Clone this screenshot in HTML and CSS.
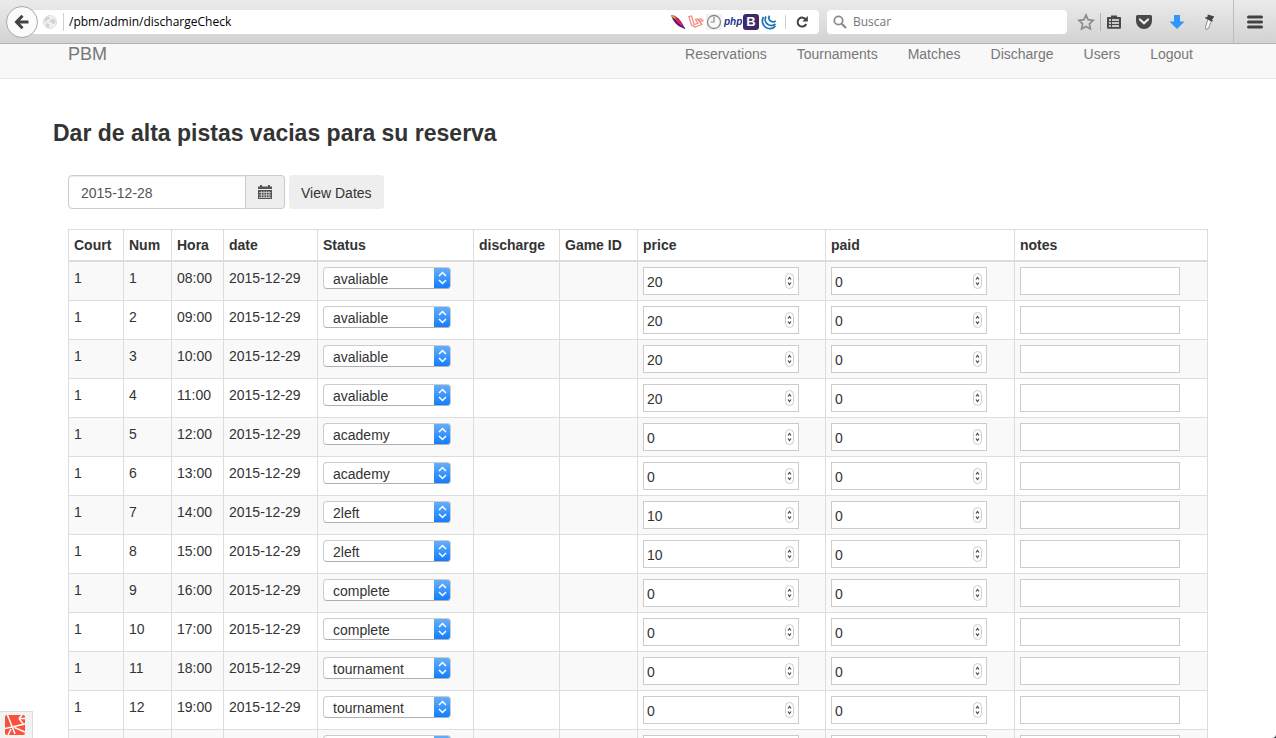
FILE: index.html
```html
<!DOCTYPE html>
<html lang="es">
<head>
<meta charset="utf-8">
<title>PBM</title>
<link rel="stylesheet" href="styles.css">
</head>
<body>
<header class="toolbar">
  <button class="back" aria-label="Back"><svg width="16" height="16" viewBox="0 0 16 16" fill="none" stroke="#424242" stroke-width="3"><path d="M14.500 8H3M8.500 1.800 2.500 8l6 6.200"/></svg></button>
  <div class="urlbar">
    <svg class="globe" width="14" height="14" viewBox="0 0 14 14"><circle cx="7" cy="7" r="6.500" fill="#f0f0f0" stroke="#dedede"/><path d="M2 3.200 5 1.500l2 1-1 2-2 .5-.5 2L1.500 6zM7 5.500l3-2 2.500 2-.5 3-2 .5-1.500-1.500L6.500 7zM3 8l3 1 .5 2.500L5 13 3 11z" fill="#d3d3d3"/></svg>
    <input class="url" type="text" aria-label="Address" value="/pbm/admin/dischargeCheck">
    <div class="sites">
      <svg width="16" height="16" viewBox="0 0 16 16"><path d="M1 1c4 0 8 3 11 8l3 5.500L11 13C6 11 3 7 1 1z" fill="#a3197c"/><path d="M1 1c2 .2 4 1.500 5.500 3L5 6.500C3 5 2 3 1 1z" fill="#d9a32b"/><path d="M5 3.500c3 1.500 5.500 4 7.500 7.500l-2 0C7.500 9 5.500 6.500 5 3.500z" fill="#e0244f"/><path d="M3 4c3 5 6 8 12 10.500" stroke="#3b1a88" stroke-width="1.300" fill="none"/></svg>
      <svg width="16" height="16" viewBox="0 0 16 16" fill="none" stroke="#f58a7e" stroke-width="1.200"><path d="M.8 2.500 3.500 2l2.500 8.500 4-1.200L7.500 5.500 9.500 5l4.500 5.500-7 2.500-3.500-2zM10.500 5.500l2-.8 2.500 2-2.500.8zM.8 2.500l2.700 8.500"/></svg>
      <svg width="16" height="16" viewBox="0 0 16 16"><path fill="#f2f2f2" d="M0 0h16v16H0z"/><circle cx="8" cy="8" r="6.500" fill="#fafafa" stroke="#888" stroke-width="1.300"/><path d="M8 3v5H4.500" fill="none" stroke="#888" stroke-width="1.200"/></svg>
      <span class="php">php</span>
      <span class="boot">B</span>
      <svg width="16" height="16" viewBox="0 0 16 16" fill="none" stroke="#1a72b5" stroke-width="1.700"><path d="M2.500 3C.2 7 1.500 12 6 14c3 1.200 6.500.5 8.500-2M5 2.500c-1.500 3-1 6.500 2.500 8.300 2.500 1.200 5 .8 7-.8M8.500 1.800c-1.200 2-.8 4.300 1.500 5.500 1.700.9 3.500.6 4.800-.5"/></svg>
    </div>
    <button class="reload" aria-label="Reload"><svg width="14" height="14" viewBox="0 0 14 14"><path d="M11 4.800A4.500 4.500 0 1 0 11.200 9" fill="none" stroke="#424242" stroke-width="2"/><path d="M12.800 1v5.500H7.300z" fill="#424242"/></svg></button>
  </div>
  <label class="search">
    <svg width="14" height="14" viewBox="0 0 14 14" fill="none" stroke="#8c8c8c"><circle cx="5.500" cy="5.500" r="4.200" stroke-width="1.800"/><path d="m8.700 8.700 4.300 4.300" stroke-width="2.300"/></svg>
    <input type="text" placeholder="Buscar" aria-label="Buscar">
  </label>
  <div class="tools">
    <button class="tool star" aria-label="Bookmark"><svg width="18" height="18" viewBox="0 0 18 18"><path d="m9 2 2.100 4.700 5.100.6-3.800 3.500 1 5.100L9 13.400l-4.400 2.500 1-5.100L1.800 7.300l5.100-.6z" fill="none" stroke="#8b8b8b" stroke-width="1.700"/></svg></button>
    <button class="tool list" aria-label="Bookmarks list"><svg width="16" height="16" viewBox="0 0 16 16"><path d="M5 3V1.500h6V3h2.500A1.200 1.200 0 0 1 15 4.300v9.200a1.200 1.200 0 0 1-1.300 1.300H2.300A1.200 1.200 0 0 1 1 13.500V4.300A1.200 1.200 0 0 1 2.300 3z" fill="#484848"/><path d="M3 6h2M6 6h7M3 9h2M6 9h7M3 12h2M6 12h7" stroke="#f2f2f2" stroke-width="1.300"/></svg></button>
    <button class="tool pocket" aria-label="Pocket"><svg width="18" height="16" viewBox="0 0 18 16"><path d="M2.500 1h13A1.500 1.500 0 0 1 17 2.500V7A8 8 0 0 1 1 7V2.500A1.500 1.500 0 0 1 2.500 1z" fill="#484848"/><path d="m5 5.500 4 3.800 4-3.800" fill="none" stroke="#eee" stroke-width="2.200" stroke-linecap="round"/></svg></button>
    <button class="tool" aria-label="Downloads"><svg width="16" height="16" viewBox="0 0 16 16"><path d="M5 1h6v6.500h4.500L8 15 .5 7.500H5z" fill="#2f96fb"/></svg></button>
    <button class="tool" aria-label="Color picker"><svg width="16" height="18" viewBox="0 0 16 18"><path d="m7 6 3.500 1.500L7.500 15.500l-2.500 1-.5-2.500z" fill="#f5f7fa" stroke="#8b939b"/><path d="M4.500 4.500 11.500 8M7.500 2.500l4.500 1.500-2 3-3-1.500z" stroke="#444" stroke-width="1.700" fill="#444"/></svg></button>
    <button class="tool menu" aria-label="Menu"><svg width="16" height="14" viewBox="0 0 16 14"><path d="M1.500 2h13M1.500 7h13M1.500 12h13" stroke="#424242" stroke-width="3" stroke-linecap="round"/></svg></button>
  </div>
</header>

<nav class="navbar">
  <div class="container navbar-inner">
    <a class="brand" href="#">PBM</a>
    <div class="links">
      <a href="#">Reservations</a>
      <a href="#">Tournaments</a>
      <a href="#">Matches</a>
      <a href="#">Discharge</a>
      <a href="#">Users</a>
      <a href="#">Logout</a>
    </div>
  </div>
</nav>

<main>
  <div class="container">
    <h3>Dar de alta pistas vacias para su reserva</h3>
    <form class="dates">
      <div class="input-group">
        <input type="text" aria-label="Date" value="2015-12-28">
        <button type="button" class="addon" aria-label="Open calendar"><svg width="14" height="14" viewBox="0 0 14 14"><path d="M0 1.500h2V0h2v1.500h6V0h2v1.500h2V4H0zM0 5h14v9H0z" fill="#555"/><path d="M1 7.500h12M1 10h12M1 12.500h12M3.500 6v7M6 6v7M8.500 6v7M11 6v7" stroke="#ddd" stroke-width=".7"/></svg></button>
      </div>
      <button type="button" class="view">View Dates</button>
    </form>
    <table>
      <colgroup>
        <col class="c-court"><col class="c-num"><col class="c-hora"><col class="c-date"><col class="c-status"><col class="c-discharge"><col class="c-game"><col class="c-price"><col class="c-paid"><col class="c-notes">
      </colgroup>
      <thead>
        <tr><th>Court</th><th>Num</th><th>Hora</th><th>date</th><th>Status</th><th>discharge</th><th>Game ID</th><th>price</th><th>paid</th><th>notes</th></tr>
      </thead>
      <tbody id="slots"></tbody>
    </table>
  </div>
</main>

<button class="debug" aria-label="Debug bar"><svg width="20" height="20" viewBox="0 0 20 20"><rect width="20" height="20" rx="2" fill="#fb503b"/><path d="M2.500 0 10 19M0 13.500 20 9M14 3.500h6M14 3.500l5 6.500M9.500 12.500 20 17M6 14 3 20M14 3.500 17 0" fill="none" stroke="#fff" stroke-width="1.500"/></svg></button>
<script src="slots.js"></script>
</body>
</html>
```
FILE: styles.css
```css
* { box-sizing: border-box; }

html { background: #22303c; }

body {
  margin: 0;
  height: 100vh;
  display: flex;
  flex-direction: column;
  overflow: hidden;
  background: #fff;
  border-radius: 0 0 4px 4px;
  color: #333;
  font: 14px/20px "Liberation Sans", Arial, sans-serif;
}

button, input, select { font: inherit; color: inherit; margin: 0; }
button { padding: 0; border: 0; background: none; }
svg { display: block; flex: none; }

.container { width: 100%; max-width: 1140px; margin: 0 auto; }

/* Browser toolbar */
.toolbar {
  flex: none;
  display: flex;
  align-items: center;
  height: 44px;
  padding-left: 6px;
  background: linear-gradient(#ebebeb, #d2d2d2);
  border-bottom: 1px solid #b1b1b1;
  font: 12px/16px "Open Sans", sans-serif;
}
.back {
  z-index: 1;
  width: 32px;
  height: 32px;
  display: grid;
  place-items: center;
  background: #fbfbfb;
  border: 1px solid #a9a9a9;
  border-radius: 50%;
}
.urlbar {
  flex: 776;
  min-width: 0;
  display: flex;
  align-items: center;
  height: 24px;
  margin-left: -6px;
  padding-left: 11px;
  background: #fff;
  border-radius: 0 4px 4px 0;
}
.url {
  flex: 1;
  min-width: 0;
  height: 18px;
  margin-left: 6px;
  padding: 0 0 0 5px;
  border: 0;
  border-left: 1px solid #cfcfcf;
  background: none;
  color: #000;
}
.sites { display: flex; align-items: center; gap: 2px; padding-right: 8px; }
.php { width: 17px; color: #26358c; font: italic bold 10px/16px "Liberation Sans", sans-serif; }
.boot {
  width: 16px;
  height: 16px;
  border-radius: 3px;
  background: #3f2a66;
  color: #fff;
  text-align: center;
  font: bold 13px/16px "Liberation Sans", sans-serif;
}
.reload { width: 34px; height: 14px; padding-left: 9px; border-left: 1px solid #cfcfcf; }
.search {
  flex: 234;
  display: flex;
  align-items: center;
  gap: 6px;
  height: 24px;
  margin-left: 8px;
  padding-left: 6px;
  background: #fff;
  border-radius: 4px;
}
.search input { flex: 1; min-width: 0; padding: 0; border: 0; background: none; }
.search input::placeholder { color: #757575; opacity: 1; }
.tools { flex: none; display: flex; align-items: center; padding-left: 5px; }
.tool { width: 32px; height: 18px; display: grid; place-items: center; }
.star { width: 29px; border-right: 1px solid #b3b3b3; }
.list { width: 26px; }
.pocket { width: 34px; }
.menu { width: 43px; height: 43px; margin-left: 8px; border-left: 1px solid #bdbdbd; }

/* Site navigation */
.navbar { flex: none; padding-bottom: 14px; background: #f8f8f8; border-bottom: 1px solid #e7e7e7; }
.navbar-inner { display: flex; justify-content: space-between; }
.navbar a { color: #777; text-decoration: none; }
.brand { font-size: 18px; }
.links { display: flex; gap: 30px; padding-right: 15px; }

/* Page */
main { flex: 1; min-height: 0; overflow: hidden; }
h3 { margin: 41px 0 29px -15px; font-size: 23px; line-height: 26px; font-weight: bold; }
.dates { display: flex; gap: 4px; margin-bottom: 20px; }
.input-group { display: flex; width: 217px; height: 34px; }
.input-group input {
  flex: 1;
  min-width: 0;
  padding: 7px 12px 5px;
  border: 1px solid #ccc;
  border-radius: 4px 0 0 4px;
  box-shadow: inset 0 1px 1px rgba(0, 0, 0, .08);
  color: #555;
}
.addon {
  width: 39px;
  display: grid;
  place-items: center;
  background: #eee;
  border: 1px solid #ccc;
  border-left: 0;
  border-radius: 0 4px 4px 0;
}
.view { padding: 2px 12px 0; background: #eee; border-radius: 4px; }

table { width: 100%; table-layout: fixed; border-collapse: collapse; }
th, td { padding: 5px; border: 1px solid #ddd; text-align: left; vertical-align: top; }
th { border-bottom-width: 2px; }
tbody tr:nth-child(odd) { background: #f9f9f9; }
td { height: 39px; padding-bottom: 0; line-height: 22px; white-space: nowrap; }
.c-court { width: 55px; }
.c-num { width: 48px; }
.c-hora { width: 52px; }
.c-date { width: 94px; }
.c-status { width: 156px; }
.c-discharge { width: 86px; }
.c-game { width: 78px; }
.c-price { width: 188px; }
.c-paid { width: 189px; }
.c-notes { width: 193px; }

td input, td select { display: block; border: 1px solid #ccc; }
td select {
  width: 128px;
  height: 22px;
  padding: 2px 20px 0 9px;
  appearance: none;
  border-radius: 4px;
  border-bottom-color: #b0b0b0;
  line-height: 18px;
  background:
    url("data:image/svg+xml,%3Csvg xmlns='http://www.w3.org/2000/svg' width='17' height='22' fill='none' stroke='white' stroke-width='1.5'%3E%3Cpath d='M5 9l3.500-3.500L12 9M5 13l3.500 3.500L12 13'/%3E%3C/svg%3E") right / 17px 22px no-repeat border-box,
    linear-gradient(#69b1fa, #0d7bff) right / 17px 22px no-repeat border-box,
    #fff;
}
td input { height: 28px; padding: 2px 3px 0; background-color: #fff; }
td input[type="number"] {
  width: 156px;
  appearance: textfield;
  background: #fff url("data:image/svg+xml,%3Csvg xmlns='http://www.w3.org/2000/svg' width='9' height='16'%3E%3Crect x='.5' y='.5' width='8' height='15' rx='4' fill='white' stroke='%23ccc'/%3E%3Cpath d='M3 6.500l1.500-2L6 6.500M3 9.500l1.500 2L6 9.500' fill='none' stroke='%23444' stroke-width='1.200'/%3E%3C/svg%3E") right 4px center no-repeat;
}
td input[type="text"] { width: 160px; }

.debug {
  position: fixed;
  left: 0;
  bottom: 0;
  width: 33px;
  height: 27px;
  padding: 3px 0 3px 5px;
  background: #f3f3f3;
  border: 1px solid #ddd;
  border-width: 1px 1px 0 0;
}
```
FILE: slots.js
```javascript
const slots = [
  ["avaliable", 20], ["avaliable", 20], ["avaliable", 20], ["avaliable", 20],
  ["academy", 0], ["academy", 0], ["2left", 10], ["2left", 10],
  ["complete", 0], ["complete", 0], ["tournament", 0], ["tournament", 0],
  ["tournament", 0]
];

document.getElementById("slots").innerHTML = slots.map(([status, price], i) => {
  const num = i + 1;
  const hour = String(i + 8).padStart(2, "0") + ":00";
  return `<tr>
    <td>1</td><td>${num}</td><td>${hour}</td><td>2015-12-29</td>
    <td><select aria-label="Status ${num}"><option>${status}</option></select></td>
    <td></td><td></td>
    <td><input type="number" aria-label="Price ${num}" value="${price}"></td>
    <td><input type="number" aria-label="Paid ${num}" value="0"></td>
    <td><input type="text" aria-label="Notes ${num}"></td>
  </tr>`;
}).join("");
```
